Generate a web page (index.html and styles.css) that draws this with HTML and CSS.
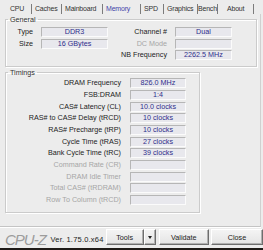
FILE: index.html
```html
<!DOCTYPE html>
<html lang="en">
<head>
    <meta charset="UTF-8">
    <title>CPU-Z | Memory</title>
    <link rel="stylesheet" href="styles.css">
</head>
<body>
    <div class="window">
        <div class="tabs">
            <span class="tab">CPU</span>
            <span class="tab">Caches</span>
            <span class="tab">Mainboard</span>
            <span class="tab active">Memory</span>
            <span class="tab">SPD</span>
            <span class="tab">Graphics</span>
            <span class="tab bench">Bench</span>
            <span class="tab">About</span>
        </div>

        <div class="panel">
            <fieldset class="group general">
                <legend>General</legend>
                <div class="general-grid">
                    <label>Type</label>
                    <div class="value">DDR3</div>
                    <label>Channel #</label>
                    <div class="value">Dual</div>

                    <label>Size</label>
                    <div class="value">16 GBytes</div>
                    <label class="disabled">DC Mode</label>
                    <div class="value"></div>

                    <span></span>
                    <span></span>
                    <label>NB Frequency</label>
                    <div class="value">2262.5 MHz</div>
                </div>
            </fieldset>

            <fieldset class="group timings">
                <legend>Timings</legend>
                <div class="timings-grid">
                    <label>DRAM Frequency</label>
                    <div class="value">826.0 MHz</div>
                    <label>FSB:DRAM</label>
                    <div class="value">1:4</div>
                    <label>CAS# Latency (CL)</label>
                    <div class="value">10.0 clocks</div>
                    <label>RAS# to CAS# Delay (tRCD)</label>
                    <div class="value">10 clocks</div>
                    <label>RAS# Precharge (tRP)</label>
                    <div class="value">10 clocks</div>
                    <label>Cycle Time (tRAS)</label>
                    <div class="value">27 clocks</div>
                    <label>Bank Cycle Time (tRC)</label>
                    <div class="value">39 clocks</div>
                    <label class="disabled">Command Rate (CR)</label>
                    <div class="value"></div>
                    <label class="disabled">DRAM Idle Timer</label>
                    <div class="value"></div>
                    <label class="disabled">Total CAS# (tRDRAM)</label>
                    <div class="value"></div>
                    <label class="disabled">Row To Column (tRCD)</label>
                    <div class="value"></div>
                </div>
            </fieldset>
        </div>

        <div class="footer">
            <span class="logo">CPU-Z</span>
            <span class="version">Ver. 1.75.0.x64</span>
            <div class="tools">
                <button class="btn tools-main">Tools</button>
                <button class="btn tools-drop"><span class="arrow"></span></button>
            </div>
            <button class="btn validate">Validate</button>
            <button class="btn close">Close</button>
        </div>

        <div class="desktop"></div>
    </div>
</body>
</html>
```

FILE: styles.css
```css
body {
    margin: 0;
    padding: 0;
    background-color: #ececec;
    font-family: "Liberation Sans", Arial, sans-serif;
    font-size: 7.2px;
    color: #222;
    overflow: hidden;
}
.window {
    width: 263px;
    height: 250px;
    overflow: hidden;
}

/* tab strip */
.tabs {
    display: grid;
    grid-template-columns: 32px 30px 41px 38px 23px 34px 20px 36px;
    height: 14px;
    padding-top: 4px;
    box-sizing: border-box;
    font-size: 7px;
    letter-spacing: -0.2px;
}
.tab {
    height: 10px;
    line-height: 10px;
    padding-left: 3px;
    border-right: 1px solid #7c7c7c;
    color: #333;
    white-space: nowrap;
}
.tab:first-child {
    padding-left: 10px;
}
.tab.bench {
    padding-left: 0;
}
.tab:last-child {
    padding-left: 9px;
}
.tab.active {
    color: #4444aa;
}

/* tab body */
.panel {
    height: 211px;
    margin-right: 2px;
    padding: 1px 0 0 5px;
    border-bottom: 1px solid #c4c4c4;
    border-right: 1px solid #d0d0d0;
    box-shadow: 0 1px 0 #fff;
}
.group {
    margin: 0;
    padding: 0;
    border: 1px solid #cbcbcb;
    box-shadow: inset 1px 1px 0 #fff, 1px 1px 0 #fff;
    box-sizing: border-box;
}
.group legend {
    margin-left: 2px;
    padding: 0 2px;
    line-height: 9px;
    color: #333;
}
.general {
    width: 252px;
    padding: 3px 0 5.67px 0;
}
.timings {
    width: 195px;
    margin-top: 1px;
    padding: 1.3px 0 7px 0;
}

.general-grid {
    display: grid;
    grid-template-columns: 27px 67px 51px 57px;
    grid-auto-rows: 10px;
    column-gap: 8px;
    row-gap: 1.67px;
}
.timings-grid {
    display: grid;
    grid-template-columns: 115px 56px;
    grid-auto-rows: 10px;
    column-gap: 9px;
    row-gap: 1.67px;
}
label {
    text-align: right;
    line-height: 10px;
    white-space: nowrap;
}
label.disabled {
    color: #a6a6a6;
}
.value {
    box-sizing: border-box;
    height: 10px;
    line-height: 8px;
    text-align: center;
    color: #2e2e8c;
    background: #e8e8ed;
    border: 1px solid;
    border-color: #b6b6b6 #fbfbfb #fbfbfb #b6b6b6;
    white-space: nowrap;
}

/* bottom bar */
.footer {
    display: flex;
    align-items: center;
    height: 21px;
    padding-left: 5px;
}
.logo {
    width: 47px;
    margin-top: 3px;
    font-size: 15px;
    font-style: italic;
    letter-spacing: -1px;
    color: #9c9c9c;
}
.version {
    width: 57px;
    margin-top: 4px;
    font-size: 7.5px;
    letter-spacing: 0.2px;
    color: #222;
}
.tools {
    display: flex;
    margin-right: 3px;
}
.btn {
    box-sizing: border-box;
    height: 16px;
    margin: 0;
    padding: 0;
    font-family: inherit;
    font-size: 7.2px;
    color: #222;
    background: linear-gradient(#f4f4f4, #e4e4e4);
    border: 1px solid;
    border-color: #fff #6e6e6e #6e6e6e #fff;
    box-shadow: inset -1px -1px 0 #b0b0b0;
    margin-top: -1px;
}
.tools-main {
    width: 38px;
}
.tools-drop {
    width: 12px;
    display: flex;
    align-items: center;
    justify-content: center;
}
.arrow {
    width: 0;
    height: 0;
    border-left: 2.5px solid transparent;
    border-right: 2.5px solid transparent;
    border-top: 3px solid #222;
}
.validate {
    width: 52px;
    margin-right: 2px;
}
.close {
    flex: none;
    width: 52px;
}

.desktop {
    height: 3px;
    background: #1e1a17;
}
```
